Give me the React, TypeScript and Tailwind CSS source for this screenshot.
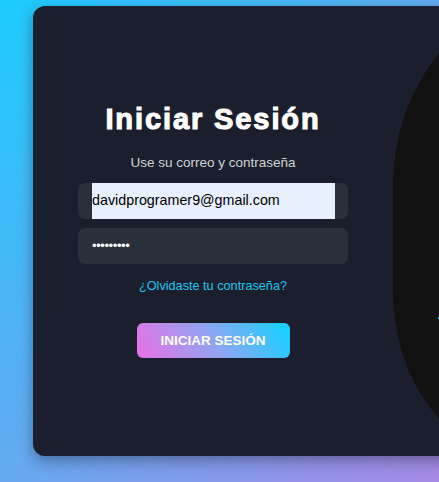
import React from "react";

export default function App() {
  return (
    <div
      className="relative w-[439px] h-[482px] overflow-hidden bg-[linear-gradient(135deg,#1dccff_0%,#a88ae6_100%)]"
      style={{ fontFamily: '"Liberation Sans", Arial, sans-serif' }}
    >
      <div className="ml-[33px] mt-[6px] w-[768px] h-[450px] rounded-[12px] bg-[#1b1f2d] shadow-[0_5px_15px_rgba(0,0,0,0.35)] flex overflow-hidden">
        <div className="w-[360px] shrink-0 flex flex-col items-center px-[45px] pt-[98.6px]">
          <h1 className="text-[29px] leading-[29px] font-bold tracking-[1.9px] text-white [-webkit-text-stroke:1.1px_white]">
            Iniciar Sesión
          </h1>
          <p className="mt-[19.4px] text-[13.5px] leading-[20px] text-[#cfd3da]">
            Use su correo y contraseña
          </p>
          <div className="mt-[10px] w-full h-[36px] rounded-[7px] bg-[#2a2f3c] pl-[14px] pr-[13px]">
            <div className="h-full bg-[#e8f0fe] flex items-center text-[14.3px] text-black">
              davidprogramer9@gmail.com
            </div>
          </div>
          <div className="mt-[9px] w-full h-[36px] rounded-[7px] bg-[#2a2f3c] pl-[14px] flex items-center text-[13px] text-white tracking-[-0.4px]">
            •••••••••
          </div>
          <a className="mt-[14px] text-[12.7px] leading-[16px] text-[#1fc6f4]">
            ¿Olvidaste tu contraseña?
          </a>
          <button className="mt-[29px] w-[153px] h-[35.5px] rounded-[6px] bg-[linear-gradient(60deg,#ea6fe4_0%,#8fa6f2_50%,#0fd2ff_100%)] text-white font-bold text-[13.5px] uppercase flex items-center justify-center">
            Iniciar Sesión
          </button>
        </div>
        <div className="relative w-[408px] h-full shrink-0 bg-[#111111] rounded-[144px_0_0_127px/180px_0_0_165px]">
          <div className="absolute left-[45px] top-[311px] w-[1px] h-[2px] bg-[#35b8e0]" />
        </div>
      </div>
    </div>
  );
}
